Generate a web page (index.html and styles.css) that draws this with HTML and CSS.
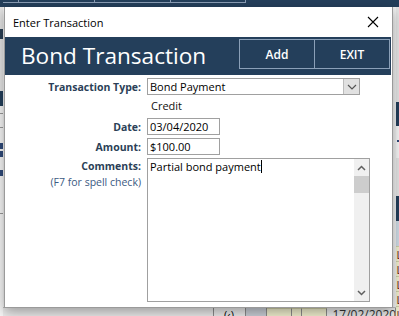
FILE: index.html
```html
<!DOCTYPE html>
<html lang="en">
<head>
    <meta charset="UTF-8">
    <title>Enter Transaction</title>
    <link rel="stylesheet" href="styles.css">
</head>
<body>
    <div class="backdrop">
        <div class="side left-side">
            <div class="band dark top"></div>
            <div class="band gray h40"><span class="glyph big"></span></div>
            <div class="band gray h44"></div>
            <div class="band dark h15"></div>
            <div class="band light h7"></div>
            <div class="band cell h14"></div>
            <div class="band cell h14"></div>
            <div class="band light h8"><span class="glyph bit"></span></div>
            <div class="band light h19"><span class="glyph bit"></span></div>
            <div class="band light h18"><span class="glyph bit"></span></div>
            <div class="band light h27"></div>
            <div class="band light rest"></div>
        </div>
        <div class="middle">
            <div class="grid-head">
                <span class="col w15"></span>
                <span class="col w76"></span>
                <span class="col w76"></span>
                <span class="col w75"></span>
            </div>
            <div class="middle-fill"></div>
            <div class="grid-foot">
                <span class="foot-cell w210"></span>
                <span class="foot-cell w31 nav">(&#8249;)</span>
                <span class="foot-cell w20 shade"></span>
                <span class="foot-cell w25 yellow"></span>
                <span class="foot-cell w10 yellow"></span>
                <span class="foot-cell w25 yellow"></span>
                <span class="foot-cell w62 date">17/02/2020</span>
            </div>
        </div>
        <div class="side right-side">
            <div class="band dark top"></div>
            <div class="band gray h95"></div>
            <div class="band dark h24"></div>
            <div class="band light h8"></div>
            <div class="band light h24"><span class="glyph dot"></span></div>
            <div class="band gray h38"></div>
            <div class="band dark h25"></div>
            <div class="band pale h25"></div>
            <div class="band yellow h15 letter">L</div>
            <div class="band yellow h15 letter">L</div>
            <div class="band yellow h15 letter">L</div>
            <div class="band yellow h15 letter">L</div>
            <div class="band yellow rest letter">L</div>
        </div>
    </div>

    <div class="dialog">
        <div class="titlebar">
            <span class="title">Enter Transaction</span>
            <svg class="close" width="12" height="12" viewBox="0 0 12 12">
                <path d="M1 1 L11 11 M11 1 L1 11" stroke="#000" stroke-width="1.1" fill="none"/>
            </svg>
        </div>
        <div class="header">
            <h1>Bond Transaction</h1>
            <div class="actions">
                <button class="hbtn">Add</button>
                <button class="hbtn">EXIT</button>
            </div>
        </div>
        <div class="form">
            <div class="row">
                <label class="lbl">Transaction Type:</label>
                <div class="select">
                    <span class="select-text">Bond Payment</span>
                    <span class="select-btn">
                        <svg width="10" height="6" viewBox="0 0 10 6">
                            <path d="M1 1 L5 5 L9 1" stroke="#555" stroke-width="1.2" fill="none"/>
                        </svg>
                    </span>
                </div>
            </div>
            <div class="row sub">
                <span class="lbl"></span>
                <span class="credit">Credit</span>
            </div>
            <div class="row date-row">
                <label class="lbl">Date:</label>
                <div class="box short">03/04/2020</div>
            </div>
            <div class="row">
                <label class="lbl">Amount:</label>
                <div class="box short">$100.00</div>
            </div>
            <div class="row comments-row">
                <div class="lbl stack">
                    <span>Comments:</span>
                    <span class="hint">(F7 for spell check)</span>
                </div>
                <div class="memo">
                    <div class="memo-text">Partial bond payment<span class="caret"></span></div>
                    <div class="scroll">
                        <span class="arrow">
                            <svg width="9" height="6" viewBox="0 0 9 6"><path d="M1 5 L4.5 1.5 L8 5" stroke="#606060" stroke-width="1.5" fill="none"/></svg>
                        </span>
                        <span class="thumb"></span>
                        <span class="track"></span>
                        <span class="arrow">
                            <svg width="9" height="6" viewBox="0 0 9 6"><path d="M1 1 L4.5 4.5 L8 1" stroke="#606060" stroke-width="1.5" fill="none"/></svg>
                        </span>
                    </div>
                </div>
            </div>
        </div>
    </div>
</body>
</html>
```

FILE: styles.css
```css
html, body {
    margin: 0;
    padding: 0;
}
body {
    width: 399px;
    height: 316px;
    overflow: hidden;
    position: relative;
    font-family: "Open Sans", "Noto Sans", sans-serif;
    background: #e9e9e9;
}
.backdrop {
    display: flex;
    height: 316px;
}
.side {
    display: flex;
    flex-direction: column;
    overflow: hidden;
}
.left-side {
    width: 5px;
}
.right-side {
    width: 7px;
}
.middle {
    flex: 1;
    display: flex;
    flex-direction: column;
}
.band {
    flex: none;
    overflow: hidden;
}
.dark { background: #243f5b; }
.gray { background: #e6e6e6; }
.light { background: #f7f7f7; }
.pale { background: #cfdce6; }
.yellow { background: #f1f0cf; border-top: 1px solid #cfcfa8; box-sizing: border-box; }
.cell { background: #f7f7f7; border-top: 1px solid #9a9a9a; box-sizing: border-box; }
.top { height: 7px; }
.h7 { height: 7px; }
.h8 { height: 8px; }
.h14 { height: 14px; }
.h15 { height: 15px; }
.h18 { height: 18px; }
.h19 { height: 19px; }
.h24 { height: 24px; }
.h25 { height: 25px; }
.h27 { height: 27px; border-bottom: 1px solid #999; }
.h38 { height: 38px; }
.h40 { height: 40px; }
.h44 { height: 44px; }
.h95 { height: 95px; }
.rest { flex: 1; }
.glyph {
    display: block;
}
.glyph.big {
    width: 4px;
    height: 10px;
    margin-top: 22px;
    background: #2a3f55;
}
.glyph.bit {
    width: 3px;
    height: 6px;
    margin-top: 2px;
    background: #2f4a7a;
    border-right: 1px solid #d9823b;
}
.glyph.dot {
    width: 3px;
    height: 2px;
    margin: 6px 0 0 1px;
    background: #2f4a7a;
    border-right: 2px solid #d9823b;
}
.letter {
    color: #6b1010;
    padding: 1px 0 0 1px;
    font-size: 11px;
    line-height: 13px;
}
.grid-head {
    height: 7px;
    background: #243f5b;
    display: flex;
    align-items: flex-start;
}
.col {
    height: 2px;
    border-right: 1px solid #8a9db4;
    border-bottom: 1px solid #8a9db4;
}
.w15 { width: 15px; }
.w76 { width: 75px; }
.w75 { width: 74px; }
.middle-fill {
    flex: 1;
    background: #f2f2f2;
}
.grid-foot {
    height: 8px;
    display: flex;
    background: #ebebeb;
    border-top: 1px solid #bdbdbd;
    overflow: hidden;
}
.foot-cell {
    height: 100%;
    border-right: 1px solid #8c8c8c;
    font-size: 11px;
    line-height: 12px;
    overflow: hidden;
}
.w210 { width: 210px; }
.w31 { width: 31px; }
.w20 { width: 20px; }
.w25 { width: 25px; }
.w10 { width: 10px; }
.w62 { width: 62px; }
.shade { background: #c9ced6; }
.nav { text-align: center; padding-top: 1px; }
.date { padding: 1px 0 0 6px; color: #333; font-size: 12px; }

.dialog {
    position: absolute;
    left: 4px;
    top: 7px;
    width: 387px;
    height: 300px;
    background: #fff;
    border: 1px solid #9a9a9a;
    border-top: 0;
    box-shadow: 0 4px 12px rgba(0, 0, 0, 0.35);
    display: flex;
    flex-direction: column;
}
.titlebar {
    height: 30px;
    display: flex;
    align-items: center;
    justify-content: space-between;
    padding: 0 13px 0 8px;
}
.title {
    font-size: 11px;
    color: #000;
}
.header {
    height: 38px;
    margin-right: 1px;
    background: #243f5b;
    display: flex;
    justify-content: space-between;
}
.header h1 {
    margin: 0;
    padding: 0 0 0 16px;
    font-weight: normal;
    font-size: 22.6px;
    line-height: 37px;
    color: #fff;
}
.actions {
    display: flex;
    padding: 2px 1px 6px 0;
}
.hbtn {
    width: 76px;
    height: 30px;
    margin-left: -1px;
    background: #243f5b;
    border: 1px solid #8ba0b8;
    color: #fff;
    font-family: "Open Sans", "Noto Sans", sans-serif;
    font-size: 12px;
    font-weight: 600;
    padding: 0;
}
.form {
    padding-top: 3px;
    display: flex;
    flex-direction: column;
    gap: 3px;
}
.row {
    display: flex;
    align-items: center;
    gap: 6px;
}
.lbl {
    width: 136px;
    text-align: right;
    font-size: 10.5px;
    font-weight: bold;
    color: #2b3f57;
}
.select {
    width: 211px;
    height: 15px;
    border: 1px solid #a0a0a0;
    display: flex;
    justify-content: space-between;
    font-size: 11px;
}
.select-text {
    padding-left: 2px;
    line-height: 15px;
}
.select-btn {
    width: 15px;
    background: #e1e1e1;
    border-left: 1px solid #bcbcbc;
    display: flex;
    align-items: center;
    justify-content: center;
}
.sub {
    height: 15px;
}
.credit {
    font-size: 11px;
    padding-left: 4px;
    color: #111;
}
.date-row {
    margin-top: 2px;
}
.box {
    height: 15px;
    border: 1px solid #a0a0a0;
    font-size: 11px;
    line-height: 15px;
    padding-left: 2px;
    box-sizing: content-box;
}
.short {
    width: 69px;
}
.comments-row {
    align-items: flex-start;
}
.stack {
    display: flex;
    flex-direction: column;
    align-items: flex-end;
    line-height: 15px;
    padding-top: 1px;
}
.hint {
    font-weight: normal;
    color: #3c5a82;
    margin-top: 1px;
}
.memo {
    width: 221px;
    height: 142px;
    border: 1px solid #a0a0a0;
    display: flex;
    justify-content: space-between;
}
.memo-text {
    font-size: 11px;
    line-height: 15px;
    padding: 0 0 0 2px;
    color: #000;
}
.caret {
    display: inline-block;
    width: 1px;
    height: 13px;
    background: #000;
    vertical-align: -2px;
}
.scroll {
    width: 15px;
    background: #f0f0f0;
    display: flex;
    flex-direction: column;
}
.arrow {
    height: 17px;
    display: flex;
    align-items: center;
    justify-content: center;
}
.thumb {
    height: 17px;
    background: #cdcdcd;
}
.track {
    flex: 1;
}
```
